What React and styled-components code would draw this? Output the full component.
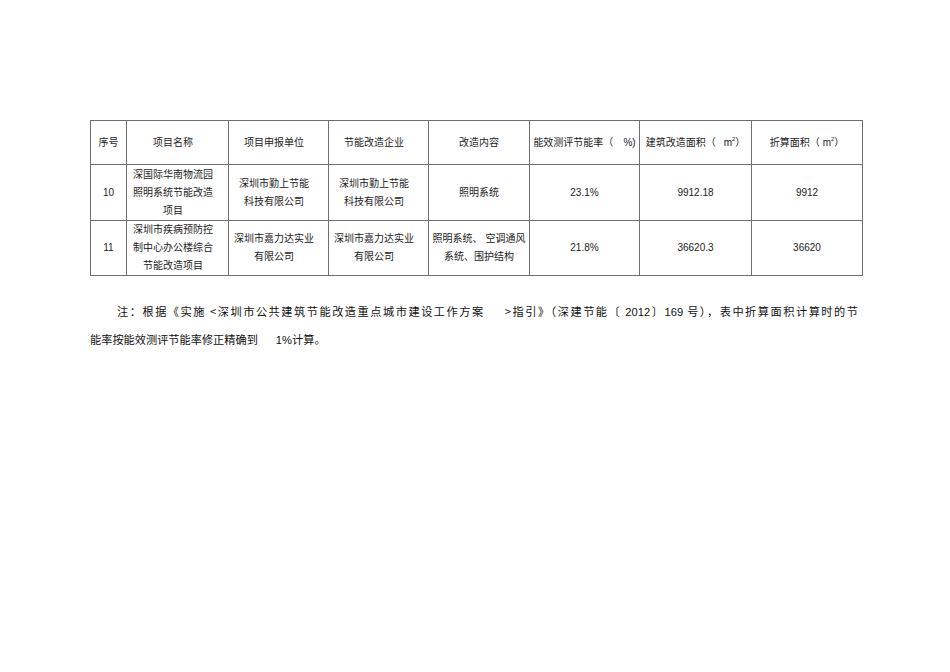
import React from "react";
import styled, { createGlobalStyle } from "styled-components";

const Global = createGlobalStyle`
  html, body { margin: 0; padding: 0; background: #fff; }
  body { font-family: "Liberation Sans", "Noto Sans CJK SC", sans-serif; color: #1a1a1a; }
`;

const Page = styled.div`
  width: 950px;
  height: 672px;
  padding: 120px 0 0 90px;
  box-sizing: border-box;
  background: #fff;
`;

const Table = styled.table`
  border-collapse: collapse;
  table-layout: fixed;
  width: 772px;
  font-size: 10px;
  line-height: 18px;
  color: #222;
`;

const Cell = styled.td`
  border: 1.4px solid #6f6f6f;
  padding: 0 ${(p) => (p.$cjk ? 9 : 0)}px 0 0;
  text-align: center;
  vertical-align: middle;
  white-space: nowrap;
  overflow: visible;
`;

const HeadRow = styled.tr`
  height: 44px;
`;

const BodyRow = styled.tr`
  height: ${(p) => p.$h}px;
`;

const Num = styled.span`
  font-family: "Liberation Sans", Arial, sans-serif;
  font-size: 10px;
`;

const Sup = styled.sup`
  font-size: 6px;
  vertical-align: 5px;
  line-height: 0;
`;

const Gap = styled.span`
  display: inline-block;
  width: ${(p) => p.$w}px;
`;

const Note = styled.div`
  margin: 22px 0 0 0;
  width: 768px;
  font-size: 11.2px;
  line-height: 27px;
  color: #111;
  font-family: "Noto Sans CJK SC", sans-serif;
`;

const NoteLine = styled.div`
  white-space: nowrap;
  text-align: ${(p) => (p.$justify ? "justify" : "left")};
  text-align-last: ${(p) => (p.$justify ? "justify" : "left")};
  text-justify: inter-character;
  padding-left: ${(p) => (p.$indent ? 27 : 0)}px;
`;

const Latin = styled.span`
  font-family: "Liberation Sans", Arial, sans-serif;
`;

const widths = [36, 102, 100, 100, 101, 110, 112, 111];

export default function App() {
  return (
    <Page>
      <Global />
      <Table>
        <colgroup>
          {widths.map((w, i) => (
            <col key={i} style={{ width: w }} />
          ))}
        </colgroup>
        <tbody>
          <HeadRow>
            <Cell>序号</Cell>
            <Cell $cjk>项目名称</Cell>
            <Cell $cjk>项目申报单位</Cell>
            <Cell $cjk>节能改造企业</Cell>
            <Cell>改造内容</Cell>
            <Cell>
              能效测评节能率（<Gap $w={10} />%)
            </Cell>
            <Cell>
              建筑改造面积（<Gap $w={8} />m<Sup>2</Sup>）
            </Cell>
            <Cell>
              折算面积（<Gap $w={3} />m<Sup>2</Sup>）
            </Cell>
          </HeadRow>
          <BodyRow $h={56}>
            <Cell><Num>10</Num></Cell>
            <Cell $cjk>
              深国际华南物流园
              <br />
              照明系统节能改造
              <br />
              项目
            </Cell>
            <Cell $cjk>
              深圳市勤上节能
              <br />
              科技有限公司
            </Cell>
            <Cell $cjk>
              深圳市勤上节能
              <br />
              科技有限公司
            </Cell>
            <Cell>照明系统</Cell>
            <Cell><Num>23.1%</Num></Cell>
            <Cell><Num>9912.18</Num></Cell>
            <Cell><Num>9912</Num></Cell>
          </BodyRow>
          <BodyRow $h={55}>
            <Cell><Num>11</Num></Cell>
            <Cell $cjk>
              深圳市疾病预防控
              <br />
              制中心办公楼综合
              <br />
              节能改造项目
            </Cell>
            <Cell $cjk>
              深圳市嘉力达实业
              <br />
              有限公司
            </Cell>
            <Cell $cjk>
              深圳市嘉力达实业
              <br />
              有限公司
            </Cell>
            <Cell>
              照明系统、 空调通风
              <br />
              系统、围护结构
            </Cell>
            <Cell><Num>21.8%</Num></Cell>
            <Cell><Num>36620.3</Num></Cell>
            <Cell><Num>36620</Num></Cell>
          </BodyRow>
        </tbody>
      </Table>
      <Note>
        <NoteLine $justify $indent>
          注：根据《实施 &lt;深圳市公共建筑节能改造重点城市建设工作方案<Gap $w={20} />&gt;指引》（深建节能〔 <Latin>2012</Latin>〕<Latin>169</Latin> 号），表中折算面积计算时的节
        </NoteLine>
        <NoteLine>
          能率按能效测评节能率修正精确到<Gap $w={18} /><Latin>1%</Latin>计算。
        </NoteLine>
      </Note>
    </Page>
  );
}
